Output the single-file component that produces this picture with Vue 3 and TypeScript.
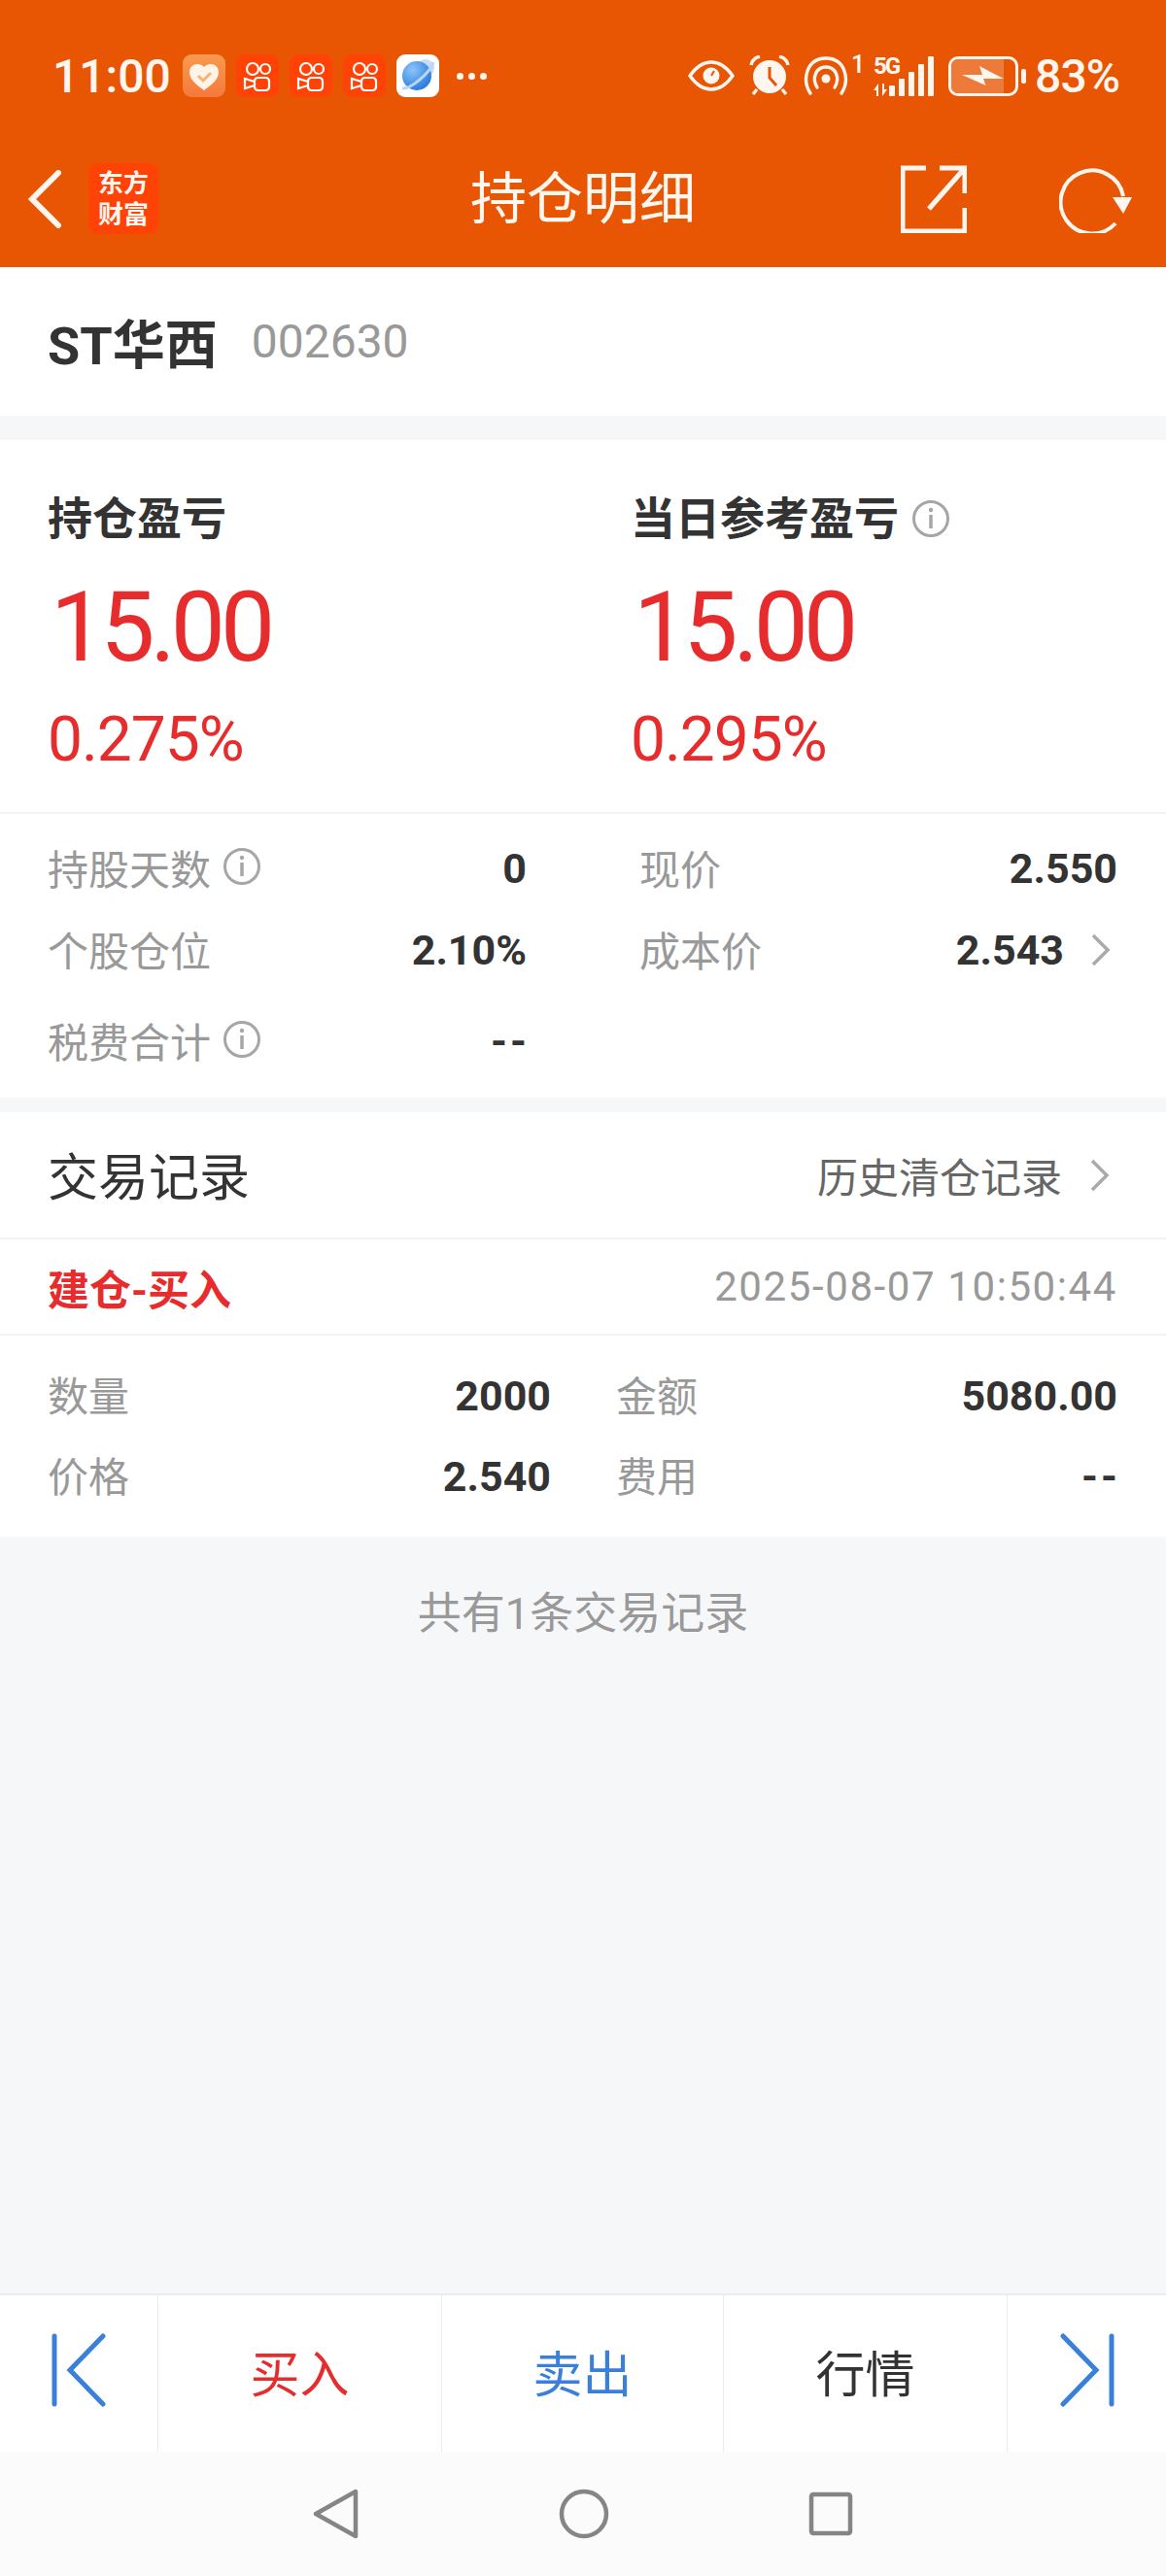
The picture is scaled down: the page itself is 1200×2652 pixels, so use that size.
<template>
  <div class="page">
    <header class="head">
      <div class="status">
        <span class="time">11:00</span>
        <div class="apps">
          <svg class="tile" viewBox="0 0 44 44">
            <defs>
              <linearGradient id="hg" x1="0" y1="0" x2="0" y2="1">
                <stop offset="0" stop-color="#f99a50" />
                <stop offset="1" stop-color="#f5793c" />
              </linearGradient>
              <radialGradient id="pg" cx="0.35" cy="0.3" r="0.8">
                <stop offset="0" stop-color="#8cc4f8" />
                <stop offset="1" stop-color="#1f74dc" />
              </radialGradient>
            </defs>
            <rect width="44" height="44" rx="9" fill="url(#hg)" />
            <path d="M22 37C14 31 7 26 7 18c0-5 4-8 8-8 3 0 5 1 7 3 2-2 4-3 7-3 4 0 8 3 8 8 0 8-7 13-15 19z" fill="#fff4e8" />
            <path d="M16 22l5 5 8-8" fill="none" stroke="#f8b376" stroke-width="3" />
          </svg>
          <svg v-for="n in 3" :key="n" class="tile" viewBox="0 0 44 44">
            <rect width="44" height="44" rx="9" fill="#ff4306" />
            <g fill="none" stroke="#fff" stroke-width="2.2">
              <circle cx="17" cy="15" r="6" />
              <circle cx="30" cy="15" r="5" />
              <rect x="19" y="24" width="15" height="13" rx="3.500" />
              <path d="M19 28l-10-3v10l10-3" />
            </g>
          </svg>
          <svg class="tile" viewBox="0 0 44 44">
            <rect width="44" height="44" rx="9" fill="#fff" />
            <circle cx="30" cy="14" r="9" fill="#c7dcfb" />
            <circle cx="21" cy="22" r="15" fill="url(#pg)" />
            <path d="M6 35C14 36 34 20 38 8" fill="none" stroke="#b9d6fb" stroke-width="3" />
          </svg>
          <div class="dots"><i></i><i></i><i></i></div>
        </div>
        <div class="sys">
          <svg width="48" height="32" viewBox="0 0 48 32" fill="none" stroke="#fff6f0">
            <path d="M2 16C9 6 16 2 24 2s15 4 22 14c-7 10-14 14-22 14S9 26 2 16z" stroke-width="3.4" />
            <circle cx="24" cy="16" r="8.5" fill="#fff6f0" stroke="none" />
            <path d="M24 16l3-5" stroke="#e85604" stroke-width="2" />
          </svg>
          <svg width="42" height="42" viewBox="0 0 42 42">
            <circle cx="21" cy="22" r="17" fill="#fff6f0" />
            <path d="M21 12v11l7 8" fill="none" stroke="#e85604" stroke-width="3" />
            <path d="M2 10c1-5 5-8 9-9M40 10c-1-5-5-8-9-9M8 35l-4 5M34 35l4 5" fill="none" stroke="#fff6f0" stroke-width="3.4" />
          </svg>
          <svg class="hotspot" width="48" height="40" viewBox="0 0 48 40" fill="none" stroke="#fff6f0" stroke-width="3.4" stroke-linecap="round">
            <path d="M8 38C-1 24 4 2 24 2s25 22 16 36" />
            <path d="M15 32C9 22 14 11 24 11s15 11 9 21" />
            <circle cx="24" cy="23" r="4.5" fill="#fff6f0" stroke="none" />
          </svg>
          <span class="sim">1</span>
          <div class="net">
            <span class="five">5G</span>
            <svg width="17" height="13" viewBox="0 0 17 13" fill="#fff6f0">
              <path d="M5 0v13H3V7H0zM9 0h2v6h3l-5 7z" />
            </svg>
          </div>
          <div class="bars">
            <i style="height: 11px"></i>
            <i style="height: 18px"></i>
            <i style="height: 25px"></i>
            <i style="height: 33px"></i>
            <i style="height: 41px"></i>
          </div>
          <div class="battery">
            <div class="cell">
              <div class="fill"></div>
              <svg class="bolt" width="44" height="21" viewBox="0 0 44 21">
                <path d="M0 9H21L18 0L43 13H22L24.500 20z" fill="#fff6f0" />
              </svg>
            </div>
            <div class="nub"></div>
          </div>
          <span class="pct">83%</span>
        </div>
      </div>
      <nav class="bar">
        <div class="bar-left">
          <svg class="back" width="34" height="60" viewBox="0 0 34 60">
            <path d="M31 3L4 30l27 27" fill="none" stroke="#fff6f0" stroke-width="6" stroke-linecap="round" />
          </svg>
          <div class="logo">东方<br />财富</div>
        </div>
        <div class="title">持仓明细</div>
        <div class="bar-right">
          <svg width="68" height="70" viewBox="0 0 68 70" fill="none" stroke="#fff6f0" stroke-width="5">
            <path d="M26 3H2v65h64V44M40 3h26v26M66 3L29 45" />
          </svg>
          <svg width="76" height="70" viewBox="0 0 76 70">
            <path d="M58 60A32.500 32.500 0 1 1 66 32" fill="none" stroke="#fff6f0" stroke-width="4" />
            <path d="M55 33h20l-9 17z" fill="#fff6f0" />
          </svg>
        </div>
      </nav>
    </header>

    <section class="stock">
      <span class="name">ST华西</span>
      <span class="code">002630</span>
    </section>

    <section class="card">
      <div class="profit">
        <div v-for="p in profits" :key="p.label" class="pcol">
          <div class="plabel">
            {{ p.label }}
            <svg v-if="p.info" class="info" viewBox="0 0 40 40"><use href="#info-i" /></svg>
          </div>
          <div class="pnum">{{ p.value }}</div>
          <div class="prate">{{ p.rate }}</div>
        </div>
      </div>
      <div class="stats">
        <div v-for="s in stats" :key="s.label" class="stat">
          <span class="slabel">
            {{ s.label }}
            <svg v-if="s.info" class="info" viewBox="0 0 40 40"><use href="#info-i" /></svg>
          </span>
          <span class="sval" :class="{ dash: s.value === '--' }">{{ s.value }}</span>
          <svg v-if="s.arrow" class="chev" width="22" height="34" viewBox="0 0 22 34">
            <path d="M3 2l15 15L3 32" fill="none" stroke="#aaa" stroke-width="3.500" />
          </svg>
        </div>
      </div>
    </section>

    <section class="trades">
      <div class="thead">
        <span class="ttitle">交易记录</span>
        <span class="hist">
          历史清仓记录
          <svg width="22" height="34" viewBox="0 0 22 34">
            <path d="M3 2l15 15L3 32" fill="none" stroke="#aaa" stroke-width="3.500" />
          </svg>
        </span>
      </div>
      <div class="tmeta">
        <span class="ttype">建仓-买入</span>
        <span class="tdate">2025-08-07 10:50:44</span>
      </div>
      <div class="tbody">
        <div v-for="d in details" :key="d.label" class="dcell">
          <span class="slabel">{{ d.label }}</span>
          <span class="sval" :class="{ dash: d.value === '--' }">{{ d.value }}</span>
        </div>
      </div>
    </section>

    <div class="count">共有1条交易记录</div>

    <footer class="actions">
      <div class="side">
        <svg width="56" height="76" viewBox="0 0 56 76" fill="none" stroke="#3a80da" stroke-width="5" stroke-linecap="round">
          <path d="M3 3v70M53 3L19 38l34 35" />
        </svg>
      </div>
      <div class="act buy">买入</div>
      <div class="act sell">卖出</div>
      <div class="act quote">行情</div>
      <div class="side last">
        <svg width="56" height="76" viewBox="0 0 56 76" fill="none" stroke="#3a80da" stroke-width="5" stroke-linecap="round">
          <path d="M53 3v70M3 3l34 35L3 73" />
        </svg>
      </div>
    </footer>

    <div class="sysnav">
      <svg width="48" height="52" viewBox="0 0 48 52" fill="none" stroke="#858585" stroke-width="4.500" stroke-linejoin="round">
        <path d="M44 3v46L3 26z" />
      </svg>
      <svg width="52" height="52" viewBox="0 0 52 52" fill="none" stroke="#858585" stroke-width="4.500">
        <circle cx="26" cy="26" r="23" />
      </svg>
      <svg width="46" height="46" viewBox="0 0 46 46" fill="none" stroke="#858585" stroke-width="4.500" stroke-linejoin="round">
        <rect x="3" y="3" width="40" height="40" rx="2" />
      </svg>
    </div>

    <svg width="0" height="0" class="defs">
      <symbol id="info-i" viewBox="0 0 40 40">
        <circle cx="20" cy="20" r="17.500" fill="none" stroke="#a6a6a6" stroke-width="3" />
        <path d="M20 16v14" stroke="#a6a6a6" stroke-width="3.500" />
        <circle cx="20" cy="11" r="2.200" fill="#a6a6a6" />
      </symbol>
    </svg>
  </div>
</template>

<script setup lang="ts">
interface Stat {
  label: string
  value: string
  info?: boolean
  arrow?: boolean
}

const profits = [
  { label: '持仓盈亏', value: '15.00', rate: '0.275%', info: false },
  { label: '当日参考盈亏', value: '15.00', rate: '0.295%', info: true },
]

const stats: Stat[] = [
  { label: '持股天数', value: '0', info: true },
  { label: '现价', value: '2.550' },
  { label: '个股仓位', value: '2.10%' },
  { label: '成本价', value: '2.543', arrow: true },
  { label: '税费合计', value: '--', info: true },
]

const details: Stat[] = [
  { label: '数量', value: '2000' },
  { label: '金额', value: '5080.00' },
  { label: '价格', value: '2.540' },
  { label: '费用', value: '--' },
]
</script>

<style>
html,
body {
  margin: 0;
  background: #f6f7f9;
}
</style>

<style scoped>
.page {
  width: 1200px;
  height: 2652px;
  display: flex;
  flex-direction: column;
  background: #f6f7f9;
  font-family: Roboto, "Noto Sans CJK SC", sans-serif;
  color: #333;
  overflow: hidden;
}
.defs {
  position: absolute;
}
.head {
  height: 275px;
  background: #e85604;
  flex: none;
}
.status {
  height: 156px;
  box-sizing: border-box;
  padding: 0 48px 0 54px;
  display: flex;
  align-items: center;
  color: #fff6f0;
}
.time {
  font-size: 48px;
  font-weight: 500;
  width: 134px;
}
.apps {
  display: flex;
  align-items: center;
  gap: 11px;
}
.tile {
  width: 44px;
  height: 44px;
  display: block;
}
.dots {
  display: flex;
  gap: 5px;
  margin-left: 7px;
}
.dots i {
  width: 7px;
  height: 7px;
  border-radius: 50%;
  background: #fff6f0;
}
.sys {
  margin-left: auto;
  display: flex;
  align-items: center;
  gap: 15px;
}
.hotspot {
  margin-left: -2px;
}
.sim {
  font-size: 25px;
  font-weight: 500;
  margin: -24px 0 0 -13px;
}
.net {
  display: flex;
  flex-direction: column;
  gap: 8px;
  margin-left: -6px;
  width: 27px;
}
.five {
  font-size: 24px;
  line-height: 20px;
  font-weight: 700;
  letter-spacing: -2px;
}
.bars {
  display: flex;
  align-items: flex-end;
  gap: 4px;
  margin-left: -26px;
  height: 41px;
}
.bars i {
  width: 6px;
  border-radius: 1px;
  background: #fff6f0;
}
.battery {
  display: flex;
  align-items: center;
  gap: 3px;
}
.cell {
  width: 72px;
  height: 41px;
  box-sizing: border-box;
  border: 3.5px solid #fff6f0;
  border-radius: 10px;
  position: relative;
  overflow: hidden;
}
.fill {
  width: 82%;
  height: 100%;
  background: #ee7a3a;
}
.bolt {
  position: absolute;
  left: 11px;
  top: 7px;
}
.nub {
  width: 5px;
  height: 15px;
  border-radius: 2px;
  background: #fff6f0;
}
.pct {
  font-size: 48px;
  font-weight: 500;
  margin-left: -6px;
  letter-spacing: -1px;
}
.bar {
  height: 119px;
  display: grid;
  grid-template-columns: 1fr auto 1fr;
  align-items: center;
  padding: 0 29px 22px 29px;
  box-sizing: border-box;
}
.bar-left {
  display: flex;
  align-items: center;
  gap: 28px;
}
.back {
  display: block;
}
.logo {
  width: 72px;
  height: 73px;
  border-radius: 10px;
  background: #ff4306;
  color: #fff6f0;
  font-size: 26px;
  line-height: 32px;
  font-weight: 700;
  text-align: center;
  padding-top: 5px;
  box-sizing: border-box;
}
.title {
  font-size: 58px;
  color: #fff6f0;
  line-height: 70px;
}
.bar-right {
  display: flex;
  justify-content: flex-end;
  gap: 95px;
  margin-right: 5px;
}
.stock {
  height: 153px;
  background: #fff;
  display: flex;
  align-items: center;
  padding-left: 49px;
  gap: 35px;
  flex: none;
}
.name {
  font-size: 54px;
  font-weight: 700;
}
.code {
  font-size: 48px;
  color: #999;
}
.card {
  margin-top: 25px;
  height: 677px;
  background: #fff;
  flex: none;
}
.profit {
  height: 385px;
  box-sizing: border-box;
  border-bottom: 2px solid #f3f3f3;
  display: grid;
  grid-template-columns: 600px 1fr;
  padding: 48px 0 0 49px;
}
.plabel {
  font-size: 46px;
  font-weight: 700;
  line-height: 66px;
  display: flex;
  align-items: center;
  gap: 13px;
}
.info {
  width: 40px;
  height: 40px;
  flex: none;
}
.pnum {
  font-size: 100px;
  line-height: 120px;
  color: #e62c2c;
  margin: 19px 0 0 3px;
  letter-spacing: -5px;
}
.prate {
  font-size: 64px;
  line-height: 80px;
  color: #e62c2c;
  margin-top: 16px;
  letter-spacing: -1px;
}
.stats {
  display: grid;
  grid-template-columns: 493px 492px;
  column-gap: 116px;
  grid-template-rows: 84px 84px 104px;
  padding: 14px 50px 0 49px;
}
.stat,
.dcell {
  display: flex;
  align-items: center;
}
.slabel {
  display: flex;
  align-items: center;
  gap: 12px;
  font-size: 42px;
  color: #999;
  padding-bottom: 4px;
}
.sval {
  margin-left: auto;
  font-size: 43px;
  font-weight: 700;
  color: #333;
}
.dash {
  letter-spacing: 3px;
  margin-right: -3px;
}
.chev {
  margin-left: 27px;
  margin-right: 6px;
}
.trades {
  margin-top: 15px;
  background: #fff;
  flex: none;
}
.thead {
  height: 131px;
  box-sizing: border-box;
  border-bottom: 2px solid #f3f3f3;
  display: flex;
  align-items: center;
  justify-content: space-between;
  padding: 0 57px 0 49px;
}
.ttitle {
  font-size: 52px;
  margin-top: -2px;
}
.hist {
  display: flex;
  align-items: center;
  gap: 28px;
  font-size: 42px;
  color: #666;
}
.tmeta {
  height: 99px;
  box-sizing: border-box;
  border-bottom: 2px solid #f3f3f3;
  display: flex;
  align-items: center;
  justify-content: space-between;
  padding: 0 50px 0 49px;
}
.ttype {
  font-size: 43px;
  font-weight: 700;
  color: #e62c2c;
}
.tdate {
  font-size: 42px;
  color: #999;
  letter-spacing: 1.6px;
}
.tbody {
  height: 207px;
  box-sizing: border-box;
  display: grid;
  grid-template-columns: 518px 516px;
  column-gap: 67px;
  grid-template-rows: 83px 83px;
  padding: 20px 50px 0 49px;
}
.count {
  margin-top: 48px;
  text-align: center;
  font-size: 45px;
  line-height: 64px;
  color: #999;
}
.actions {
  margin-top: auto;
  height: 163px;
  box-sizing: border-box;
  background: #fff;
  border-top: 2px solid #ececec;
  display: grid;
  grid-template-columns: 163px 292px 290px 292px 1fr;
  flex: none;
}
.side {
  display: flex;
  align-items: center;
  justify-content: center;
  border-right: 1px solid #ececec;
  padding-bottom: 8px;
  box-sizing: border-box;
}
.side.last {
  border-right: 0;
}
.act {
  display: flex;
  align-items: center;
  justify-content: center;
  font-size: 51px;
  border-right: 1px solid #ececec;
  box-sizing: border-box;
  padding-bottom: 6px;
}
.buy {
  color: #e62c2c;
}
.sell {
  color: #3a80da;
}
.quote {
  color: #333;
}
.sysnav {
  height: 128px;
  background: #fbfbfb;
  display: flex;
  align-items: center;
  justify-content: center;
  gap: 205px;
  flex: none;
}
</style>
